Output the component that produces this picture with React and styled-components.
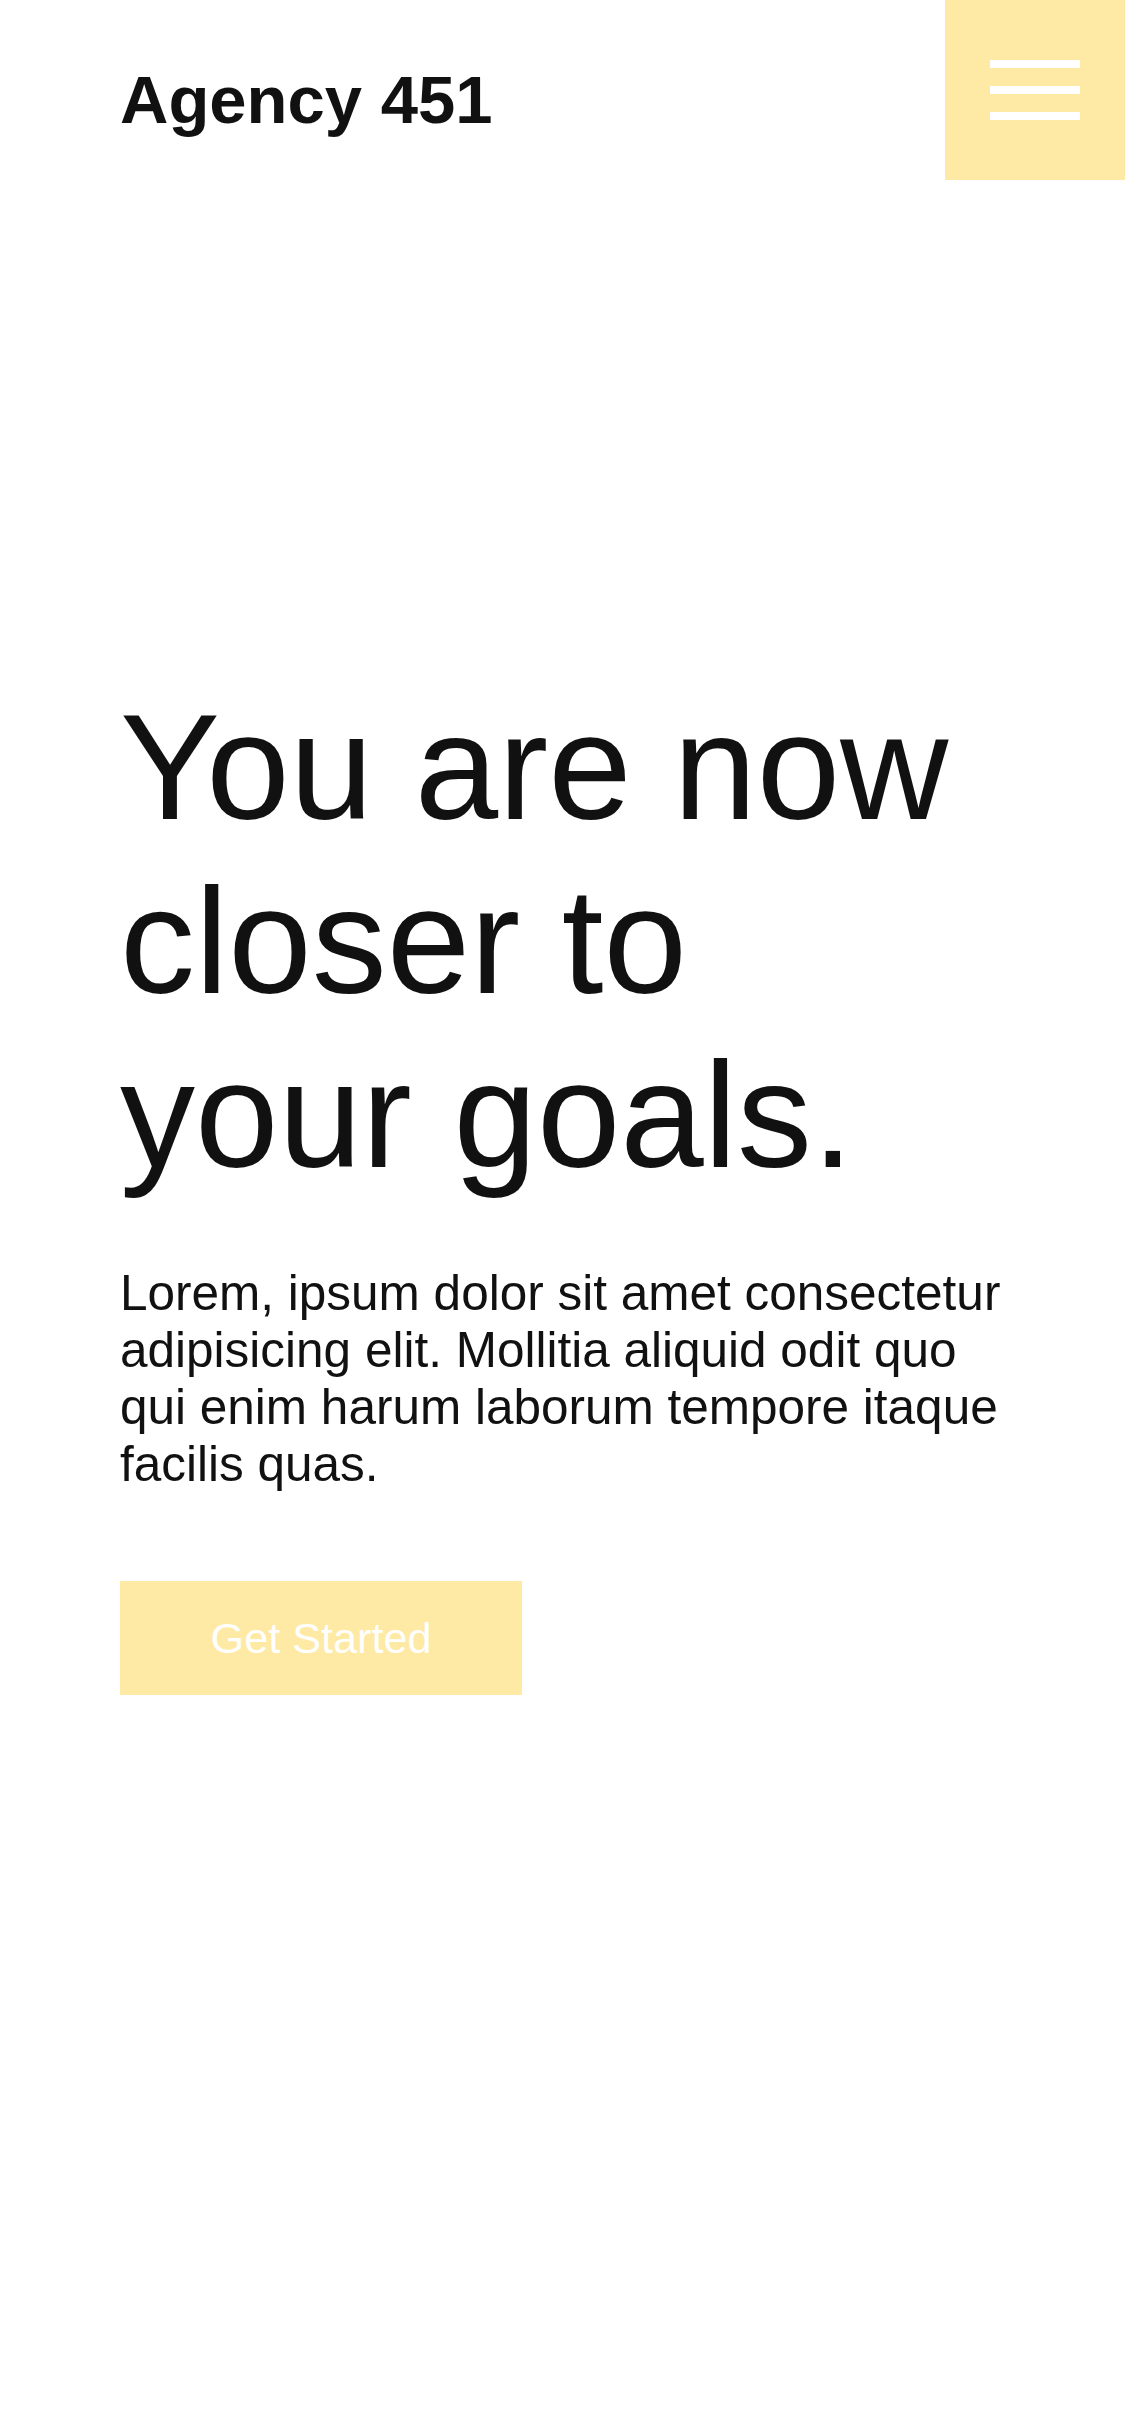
import React from "react";
import styled, { createGlobalStyle } from "styled-components";

const GlobalStyle = createGlobalStyle`
  html, body {
    margin: 0;
    padding: 0;
    background: #ffffff;
  }
  body {
    font-family: "Liberation Sans", Arial, Helvetica, sans-serif;
    color: #111111;
  }
  * { box-sizing: border-box; }
`;

const YELLOW = "#fee9a5";

const Page = styled.div`
  min-height: 2436px;
  background: #ffffff;
`;

const Header = styled.header`
  display: flex;
  justify-content: space-between;
  align-items: flex-start;
  height: 180px;
  padding-left: 120px;
`;

const Logo = styled.h1`
  margin: 61px 0 0;
  font-size: 67px;
  font-weight: 700;
  line-height: normal;
  color: #111111;
`;

const MenuButton = styled.button`
  width: 180px;
  height: 180px;
  border: none;
  padding: 0;
  background: ${YELLOW};
  display: flex;
  align-items: center;
  justify-content: center;
  cursor: pointer;
`;

const Bars = styled.span`
  display: flex;
  flex-direction: column;
  justify-content: space-between;
  width: 90px;
  height: 60px;
`;

const Bar = styled.span`
  display: block;
  width: 100%;
  height: 8px;
  background: #ffffff;
`;

const Hero = styled.section`
  padding: 0 120px;
  margin-top: 500px;
  display: flex;
  flex-direction: column;
  align-items: flex-start;
`;

const Heading = styled.h2`
  margin: 0;
  font-size: 150px;
  font-weight: 400;
  line-height: 174px;
  color: #111111;
`;

const Lead = styled.p`
  margin: 62px 0 0;
  font-size: 49.5px;
  line-height: normal;
  color: #111111;
`;

const CTA = styled.button`
  margin-top: 89px;
  width: 402px;
  height: 114px;
  border: none;
  padding: 0;
  background: ${YELLOW};
  color: #ffffff;
  font-family: inherit;
  font-size: 43.2px;
  display: inline-flex;
  align-items: center;
  justify-content: center;
  cursor: pointer;
`;

export default function App() {
  return (
    <>
      <GlobalStyle />
      <Page>
        <Header>
          <Logo>Agency 451</Logo>
          <MenuButton aria-label="Menu">
            <Bars>
              <Bar />
              <Bar />
              <Bar />
            </Bars>
          </MenuButton>
        </Header>
        <Hero>
          <Heading>You are now closer to your goals.</Heading>
          <Lead>
            Lorem, ipsum dolor sit amet consectetur adipisicing elit. Mollitia
            aliquid odit quo qui enim harum laborum tempore itaque facilis quas.
          </Lead>
          <CTA>Get Started</CTA>
        </Hero>
      </Page>
    </>
  );
}
